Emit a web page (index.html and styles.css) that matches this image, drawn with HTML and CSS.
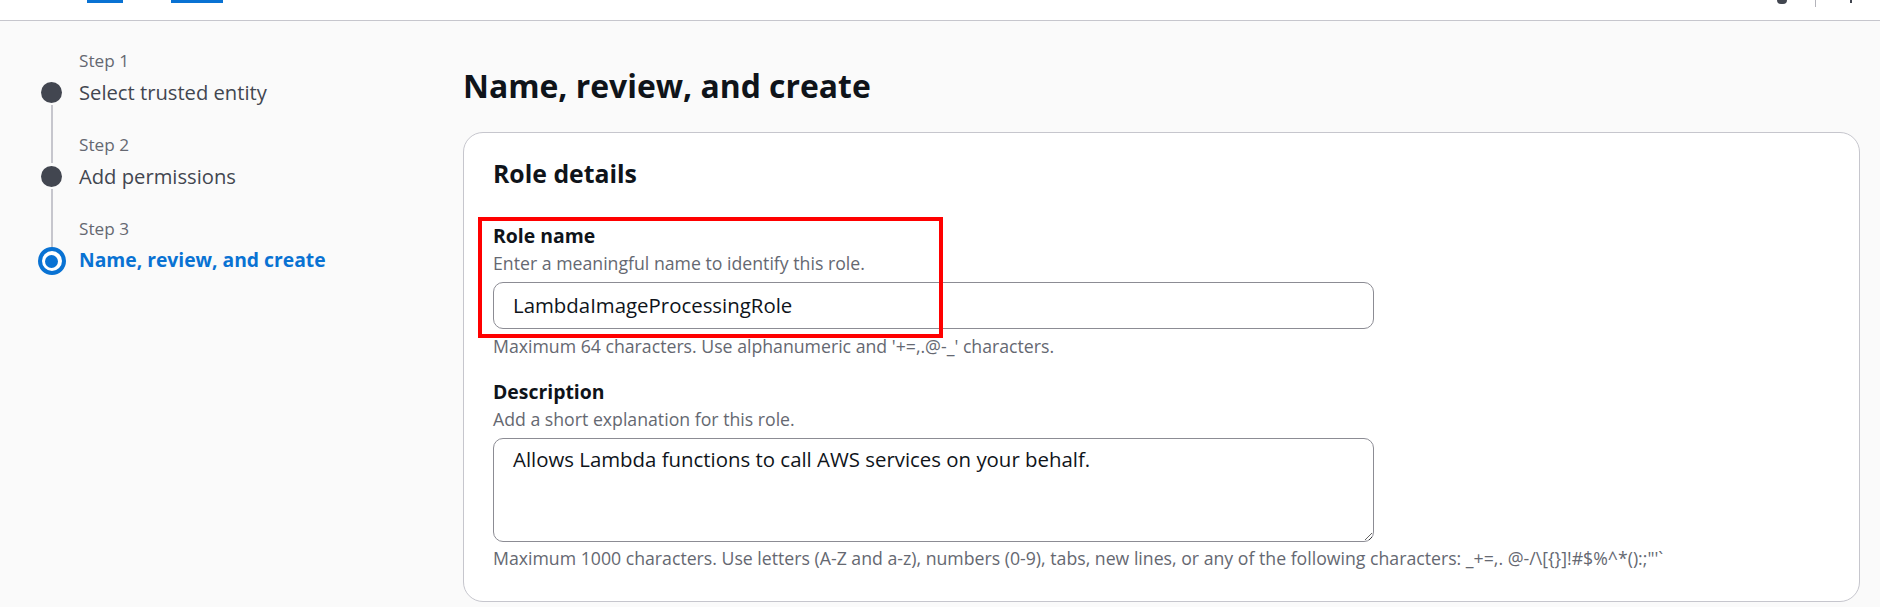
FILE: index.html
```html
<!DOCTYPE html>
<html lang="en">
<head>
<meta charset="utf-8">
<title>Name, review, and create</title>
<link rel="stylesheet" href="styles.css">
</head>
<body>
<header class="topbar">
  <nav class="crumbs">
    <a class="crumb crumb-a" href="#"></a>
    <a class="crumb crumb-b" href="#"></a>
  </nav>
  <div class="util">
    <span class="util-icon"></span>
    <span class="util-divider"></span>
    <span class="util-mark"></span>
  </div>
</header>

<div class="layout">
  <aside class="wizard-nav">
    <ol class="steps">
      <li class="step">
        <span class="track"></span>
        <span class="step-label">Step 1</span>
        <span class="dot"></span>
        <span class="step-title">Select trusted entity</span>
      </li>
      <li class="step step-next">
        <span class="track line"></span>
        <span class="step-label">Step 2</span>
        <span class="dot"></span>
        <span class="step-title">Add permissions</span>
      </li>
      <li class="step step-next step-active">
        <span class="track line"></span>
        <span class="step-label">Step 3</span>
        <span class="dot dot-active"><span class="dot-core"></span></span>
        <span class="step-title">Name, review, and create</span>
      </li>
    </ol>
  </aside>

  <main class="content">
    <h1 class="page-title">Name, review, and create</h1>
    <section class="card">
      <h2 class="card-title">Role details</h2>

      <div class="field field-highlight">
        <span class="highlight"></span>
        <label class="field-label" for="role-name">Role name</label>
        <div class="field-desc">Enter a meaningful name to identify this role.</div>
        <input id="role-name" class="text-input" type="text" value="LambdaImageProcessingRole">
        <div class="field-hint">Maximum 64 characters. Use alphanumeric and '+=,.@-_' characters.</div>
      </div>

      <div class="field field-desc-block">
        <label class="field-label" for="role-desc">Description</label>
        <div class="field-desc">Add a short explanation for this role.</div>
        <textarea id="role-desc" class="text-area">Allows Lambda functions to call AWS services on your behalf.</textarea>
        <div class="field-hint hint-tight">Maximum 1000 characters. Use letters (A-Z and a-z), numbers (0-9), tabs, new lines, or any of the following characters: _+=,. @-/\[{}]!#$%^*():;"'`</div>
      </div>
    </section>
  </main>
</div>
</body>
</html>
```
FILE: styles.css
```css
* { box-sizing: border-box; }

html, body {
  margin: 0;
  padding: 0;
  height: 100%;
  overflow: hidden;
}

body {
  font-family: "Open Sans", "Noto Sans", sans-serif;
  background: #fafafa;
  color: #0f141a;
}

/* ---------- top bar ---------- */
.topbar {
  height: 21px;
  background: #ffffff;
  border-bottom: 1px solid #c6c6cd;
  display: flex;
  justify-content: space-between;
  align-items: flex-start;
}

.crumbs {
  display: flex;
  padding-left: 87px;
  gap: 48px;
}

.crumb {
  display: block;
  height: 3px;
  background: #0972d3;
}

.crumb-a { width: 36px; }
.crumb-b { width: 52px; }

.util {
  display: flex;
  align-items: flex-start;
  padding-right: 28px;
}

.util-icon {
  width: 10px;
  height: 4px;
  background: #424650;
  border-radius: 0 0 5px 5px;
}

.util-divider {
  width: 1px;
  height: 7px;
  background: #b4b4bb;
  margin-left: 28px;
}

.util-mark {
  width: 2px;
  height: 3px;
  background: #424650;
  margin-left: 34px;
}

/* ---------- layout ---------- */
.layout {
  display: grid;
  grid-template-columns: 463px 1fr;
}

/* ---------- wizard nav ---------- */
.wizard-nav {
  padding: 29px 0 0 36px;
}

.steps {
  list-style: none;
  margin: 0;
  padding: 0;
}

.step {
  display: grid;
  grid-template-columns: 31px 1fr;
  column-gap: 12px;
}

.track {
  grid-column: 1;
  grid-row: 1;
  justify-self: center;
  align-self: stretch;
  width: 2px;
}

.track.line {
  background: #c6c6cd;
}

.step-label {
  grid-column: 2;
  grid-row: 1;
  font-size: 17.2px;
  line-height: 22px;
  color: #656871;
  margin-bottom: 7px;
}

.step-next .step-label {
  padding-top: 29px;
}

.dot {
  grid-column: 1;
  grid-row: 2;
  justify-self: center;
  align-self: center;
  width: 21px;
  height: 21px;
  border-radius: 50%;
  background: #424650;
}

.dot-active {
  width: 28px;
  height: 28px;
  background: #ffffff;
  border: 4px solid #0972d3;
  display: flex;
  align-items: center;
  justify-content: center;
}

.dot-core {
  width: 13px;
  height: 13px;
  border-radius: 50%;
  background: #0972d3;
}

.step-title {
  grid-column: 2;
  grid-row: 2;
  font-size: 20.2px;
  line-height: 26px;
  color: #424650;
  white-space: nowrap;
}

.step-active .step-title {
  font-size: 19.3px;
  font-weight: 700;
  color: #0972d3;
}

/* ---------- main content ---------- */
.content {
  padding: 44.6px 20px 0 0;
}

.page-title {
  margin: 0 0 26.4px;
  font-size: 31.9px;
  line-height: 40px;
  font-weight: 700;
  color: #0f141a;
}

.card {
  background: #ffffff;
  border: 1px solid #c6c6cd;
  border-radius: 20px;
  padding: 24.4px 29px 31px;
  height: 470px;
}

.card-title {
  margin: 0 0 35px;
  font-size: 24.8px;
  line-height: 32px;
  font-weight: 700;
}

.field {
  display: flex;
  flex-direction: column;
  align-items: flex-start;
}

.field-highlight {
  position: relative;
}

.highlight {
  position: absolute;
  left: -15px;
  top: -7.5px;
  width: 465px;
  height: 121px;
  border: 4px solid #ff0000;
  pointer-events: none;
}

.field-label {
  font-size: 19.4px;
  line-height: 24px;
  font-weight: 700;
  color: #0f141a;
}

.field-desc {
  margin-top: 2.6px;
  font-size: 17.7px;
  line-height: 24px;
  color: #656871;
}

.field-hint {
  margin-top: 5px;
  font-size: 17.7px;
  line-height: 24px;
  color: #656871;
  white-space: nowrap;
}

.hint-tight {
  margin-top: 4px;
}

.field-desc-block {
  margin-top: 22.4px;
}

.text-input,
.text-area {
  margin-top: 7px;
  width: 881px;
  font-family: "Open Sans", "Noto Sans", sans-serif;
  font-size: 20.4px;
  color: #0f141a;
  background: #ffffff;
  border: 1px solid #8c8c94;
  border-radius: 10px;
  padding: 0 19px;
  outline: none;
}

.text-input {
  height: 47px;
}

.text-area {
  display: block;
  height: 104px;
  padding-top: 6px;
  line-height: 28px;
  resize: both;
}
```
